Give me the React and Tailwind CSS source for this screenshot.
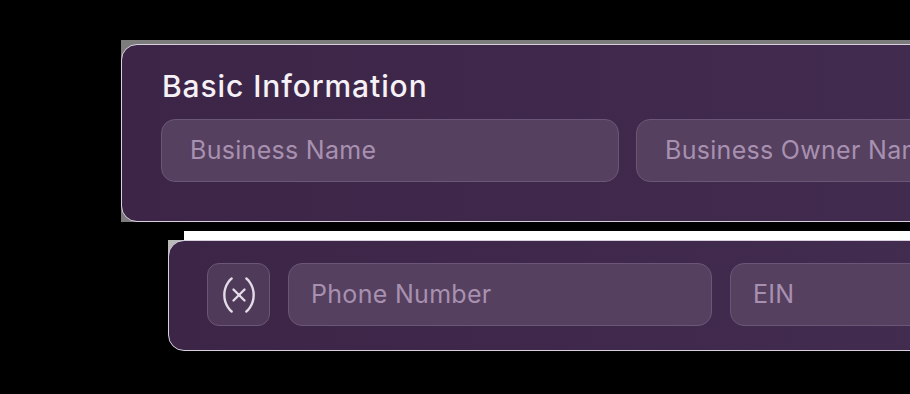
import React from 'react';
import { Variable } from 'lucide-react';

const FONT = { fontFamily: 'Inter, "Noto Sans", sans-serif' };

function Field({ label, className }) {
  return (
    <div
      className={`h-[63px] shrink-0 flex items-center rounded-[14px] border border-[#6a5676] bg-[#55405f] text-[25px] tracking-[0.3px] text-[#a891b0] whitespace-nowrap overflow-hidden ${className}`}
    >
      {label}
    </div>
  );
}

export default function App() {
  return (
    <div className="relative w-[910px] h-[394px] overflow-hidden bg-black" style={FONT}>
      {/* strips of the page behind the cards */}
      <div className="absolute left-[121px] top-[40px] w-[800px] h-[182px] bg-[#7c7c7c]" />
      <div className="absolute left-[184px] top-[231px] w-[740px] h-[20px] bg-white" />
      <div className="absolute left-[168px] top-[240px] w-[18px] h-[18px] bg-[#b9b9b9]" />

      <div className="relative pt-[44px]">
        <div className="ml-[121px] w-[900px] h-[178px] rounded-l-[16px] border border-[#d9d0de] bg-gradient-to-r from-[#3c2547] to-[#422c4f] pt-[23px] pl-[39px]">
          <h2 className="pl-[1px] text-[30px] leading-[36px] font-medium text-[#f6f1f7] tracking-[0.9px]">
            Basic Information
          </h2>
          <div className="mt-[15px] flex gap-[17px]">
            <Field label="Business Name" className="w-[458px] pl-[28px]" />
            <Field label="Business Owner Name" className="w-[400px] pl-[28px]" />
          </div>
        </div>

        <div className="mt-[18px] ml-[168px] w-[800px] h-[111px] rounded-l-[16px] border border-[#d9d0de] bg-gradient-to-r from-[#3c2547] to-[#422c4f] pl-[38px] pt-[22px]">
          <div className="flex gap-[18px]">
            <div className="w-[63px] h-[63px] shrink-0 flex items-center justify-center rounded-[12px] border border-[#6a5676] bg-[#4f3a5a] text-[#e4dbe8]">
              <Variable size={44} strokeWidth={1.3} />
            </div>
            <Field label="Phone Number" className="w-[424px] pl-[22px]" />
            <Field label="EIN" className="w-[300px] pl-[22px]" />
          </div>
        </div>
      </div>
    </div>
  );
}
